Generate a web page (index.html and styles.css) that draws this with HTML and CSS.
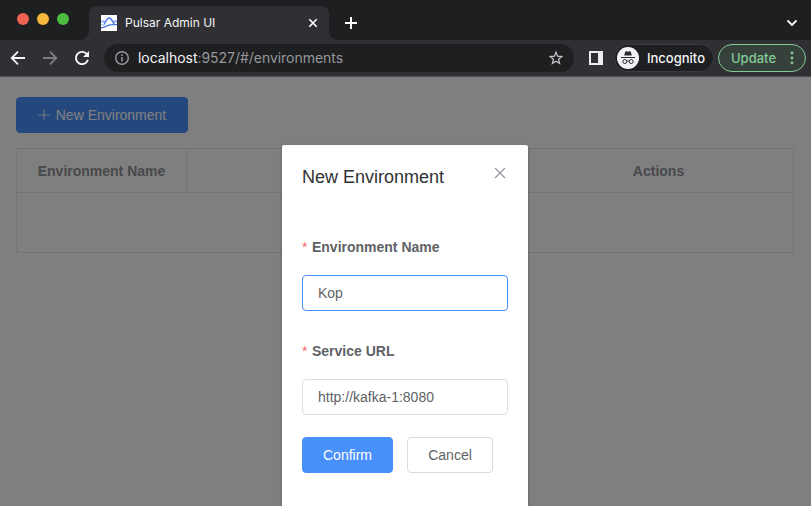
FILE: index.html
```html
<!DOCTYPE html>
<html lang="en">
<head>
<meta charset="utf-8">
<title>Pulsar Admin UI</title>
<link rel="stylesheet" href="styles.css">
</head>
<body>
<div class="window">
  <header class="tabstrip">
    <div class="lights"><i class="light red"></i><i class="light yellow"></i><i class="light green"></i></div>
    <div class="tab">
      <svg class="favicon" width="16" height="16" viewBox="0 0 16 16" fill="none"><path fill="#fff" d="M0 0h16v16H0z"/><path d="M0 6.500h4M12 6.500h4" stroke="#8eb0f4" stroke-width="1.800"/><path d="M0 9.800h3.500" stroke="#a9c2f6" stroke-width="1.200"/><path d="M0 12.800C3 12.800 5 11.200 7 10.300S12 9.600 16 9.600" stroke="#4779e6" stroke-width="1.300"/><path d="M2.800 9.300C4.800 8.500 5.200 3 8.200 3s3.200 5 5.300 6.300" stroke="#4779e6" stroke-width="1.300"/></svg>
      <span class="tab-title">Pulsar Admin UI</span>
      <svg class="tab-close" width="10" height="10" viewBox="0 0 10 10"><path d="m1.300 1.300 7.400 7.400m0-7.400L1.300 8.700" stroke="#fff" stroke-width="1.600"/></svg>
    </div>
    <svg class="new-tab" width="12" height="12" viewBox="0 0 12 12"><path d="M6 0v12M0 6h12" stroke="#fff" stroke-width="2"/></svg>
    <svg class="chevron" width="12" height="8" viewBox="0 0 12 8" fill="none"><path d="m1.500 1.500 4.500 4.500 4.500-4.500" stroke="#fff" stroke-width="1.800"/></svg>
  </header>
  <nav class="toolbar">
    <svg class="nav-icon" width="16" height="16" viewBox="0 0 16 16" fill="none"><path d="M15 8H2M8 1.700 1.700 8 8 14.300" stroke="#f5f5f6" stroke-width="1.800"/></svg>
    <svg class="nav-icon" width="16" height="16" viewBox="0 0 16 16" fill="none"><path d="M1 8h13M8 1.700 14.300 8 8 14.300" stroke="#7d7e82" stroke-width="1.800"/></svg>
    <svg class="nav-icon" width="16" height="16" viewBox="0 0 16 16"><path d="M13 4.400A6.100 6.100 0 1 0 13.900 9.700" fill="none" stroke="#f5f5f6" stroke-width="1.900"/><path d="M15 1v6H9z" fill="#f5f5f6"/></svg>
    <div class="address">
      <svg width="14" height="14" viewBox="0 0 14 14" fill="none"><circle cx="7" cy="7" r="6.300" stroke="#9a9b9f" stroke-width="1.400"/><path d="M7 6v4.500M7 3.300V5" stroke="#9a9b9f" stroke-width="1.500"/></svg>
      <span class="url"><b>localhost</b>:9527/#/environments</span>
      <svg class="star" width="16" height="16" viewBox="0 0 16 16" fill="none"><path d="m8 2.300 1.600 3.900 4.200.4-3.200 2.700 1 4.100L8 11.200l-3.600 2.200 1-4.100-3.200-2.700 4.200-.4z" stroke="#c1c2c5" stroke-width="1.300"/></svg>
    </div>
    <svg class="panel" width="14" height="14" viewBox="0 0 14 14"><path d="M0 0h14v14H0zM2 2v10h7V2z" fill="#eee" fill-rule="evenodd"/></svg>
    <div class="incognito">
      <svg width="22" height="22" viewBox="0 0 22 22"><circle cx="11" cy="11" r="11" fill="#f1f2f5"/><path d="m7.200 8.400 1-3.600q.3-.8 1-.5l1.800.4 1.800-.4q.7-.3 1 .5l1 3.600z" fill="#28292c"/><path d="M4 10.500h14" stroke="#28292c"/><g fill="none" stroke="#28292c"><circle cx="7.800" cy="14.500" r="2"/><circle cx="14.200" cy="14.500" r="2"/><path d="M9.800 14.300q1.200-.7 2.400 0"/></g></svg>
      <span>Incognito</span>
    </div>
    <div class="update"><span>Update</span><svg width="4" height="14" viewBox="0 0 4 14" fill="#81c995"><circle cx="2" cy="2" r="1.400"/><circle cx="2" cy="7" r="1.400"/><circle cx="2" cy="12" r="1.400"/></svg></div>
  </nav>
  <main class="page">
    <button class="btn create"><svg width="12" height="12" viewBox="0 0 12 12"><path d="M6 .5v11M.5 6h11" stroke="currentColor" stroke-width=".9"/></svg><span>New Environment</span></button>
    <table class="grid">
      <thead><tr><th class="name-col"><span>Environment Name</span></th><th class="url-col"></th><th class="action-col"><span>Actions</span></th></tr></thead>
      <tbody><tr><td colspan="3"></td></tr></tbody>
    </table>
    <div class="overlay">
      <section class="dialog">
        <div class="dialog-head">
          <h1><span>New Environment</span></h1>
          <svg class="dialog-close" width="12" height="12" viewBox="0 0 12 12"><path d="m1 1 10 10M11 1 1 11" stroke="#909399" stroke-width="1.100"/></svg>
        </div>
        <form>
          <label for="env-name"><em>*</em><span>Environment Name</span></label>
          <input class="focused" id="env-name" value="Kop">
          <label for="service-url"><em>*</em><span>Service URL</span></label>
          <input id="service-url" value="http://kafka-1:8080">
          <div class="buttons"><button type="button" class="btn primary">Confirm</button><button type="button" class="btn cancel">Cancel</button></div>
        </form>
      </section>
    </div>
  </main>
</div>
</body>
</html>
```
FILE: styles.css
```css
* { box-sizing: border-box; }
body { margin: 0; background: #808080; overflow: hidden; font: 14px "Liberation Sans", sans-serif; }
svg { display: block; flex: none; }
.window { height: 506px; display: flex; flex-direction: column; }

.tabstrip { height: 40px; background: #1e1f21; display: flex; align-items: flex-start; font: 500 12px/16px Inter, sans-serif; color: #f4f4f5; }
.lights { display: flex; gap: 8px; padding: 13px 0 0 17px; width: 89px; }
.light { width: 12px; height: 12px; border-radius: 50%; }
.red { background: #ee6153; }
.yellow { background: #f6b73c; }
.green { background: #4cbd40; }
.tab { position: relative; width: 240px; height: 34px; margin-top: 6px; padding: 0 11px 0 12px; border-radius: 8px 8px 0 0; background: #303034; display: flex; align-items: center; }
.tab::before, .tab::after { content: ""; position: absolute; bottom: 0; width: 8px; height: 8px; }
.tab::before { left: -8px; background: radial-gradient(circle at 0 0, transparent 7.5px, #303034 8px); }
.tab::after { right: -8px; background: radial-gradient(circle at 100% 0, transparent 7.5px, #303034 8px); }
.tab-title { margin-left: 8px; font-weight: 400; }
.tab-close { margin-left: auto; }
.new-tab { margin: 17px 0 0 16px; }
.chevron { margin: 19px 13px 0 auto; }

.toolbar { height: 37px; padding: 4px 5px 4px 10px; background: #303034; border-bottom: 1px solid #505053; display: flex; align-items: center; color: #f4f4f5; font: 500 13px/16px Inter, sans-serif; }
.nav-icon { margin-right: 16px; }
.address { width: 470px; height: 28px; margin-left: -2px; padding: 0 10px 0 11px; border-radius: 14px; background: #1e1f21; display: flex; align-items: center; }
.url { margin-left: 9px; font-size: 14px; font-weight: 400; letter-spacing: -.04px; color: #97989b; }
.url b { color: #f4f4f5; font-weight: 400; }
.star { margin-left: auto; }
.panel { margin-left: 15px; }
.incognito { width: 100px; height: 28px; margin: 0 4px 0 auto; padding-left: 2px; border: 1px solid #3b3b40; border-radius: 14px; background: #1e1f21; display: flex; align-items: center; gap: 8px; }
.update { width: 88px; height: 28px; padding: 0 11px 0 12px; border: 1px solid #81c995; border-radius: 14px; background: #37413c; color: #81c995; display: flex; align-items: center; justify-content: space-between; }

.page { position: relative; flex: 1; padding: 20px 17px 0 16px; background: #fff; }
.btn { height: 36px; padding: 0; border: 1px solid #4890fc; border-radius: 4px; font: 14px "Liberation Sans", sans-serif; display: flex; align-items: center; justify-content: center; }
.create { width: 172px; gap: 6px; background: #4890fc; color: #fff; }
.grid { width: 778px; height: 105px; margin-top: 15px; border-collapse: collapse; table-layout: fixed; }
.grid th, .grid td { border: 1px solid #e7e8f1; padding: 0; color: #909399; }
.grid th { height: 44px; border-left: 0; }
.grid th:first-child { border-left: 1px solid #e7e8f1; }
.name-col { width: 170px; }
.action-col { width: 270px; }
.overlay { position: absolute; inset: 0; padding-top: 68px; background: rgba(0, 0, 0, .5); overflow: hidden; }
.dialog { width: 246px; height: 380px; margin-left: 282px; padding: 20px; border-radius: 2px; background: #fff; box-shadow: 0 1px 3px rgba(0, 0, 0, .3); }
.dialog-head { height: 64px; display: flex; justify-content: space-between; }
h1 { margin: 0; font-size: 18px; line-height: 24px; font-weight: 400; color: #303133; white-space: nowrap; }
.dialog-close { margin: 2px 2px 0 0; }
form { display: flex; flex-direction: column; }
label { height: 46px; display: flex; gap: 4.5px; line-height: 36px; font-weight: 700; color: #606266; }
label em { color: #f56c6c; font-style: normal; font-weight: 400; }
input { width: 206px; height: 36px; margin-bottom: 22px; padding: 0 15px; border: 1px solid #dcdfe6; border-radius: 4px; outline: none; font: 14px "Liberation Sans", sans-serif; color: #606266; }
.focused { border-color: #4890fc; }
.buttons { display: flex; gap: 14px; }
.primary { width: 91px; background: #4890fc; color: #fff; }
.cancel { width: 86px; border-color: #d8dbe4; background: #fff; color: #606266; }
```
